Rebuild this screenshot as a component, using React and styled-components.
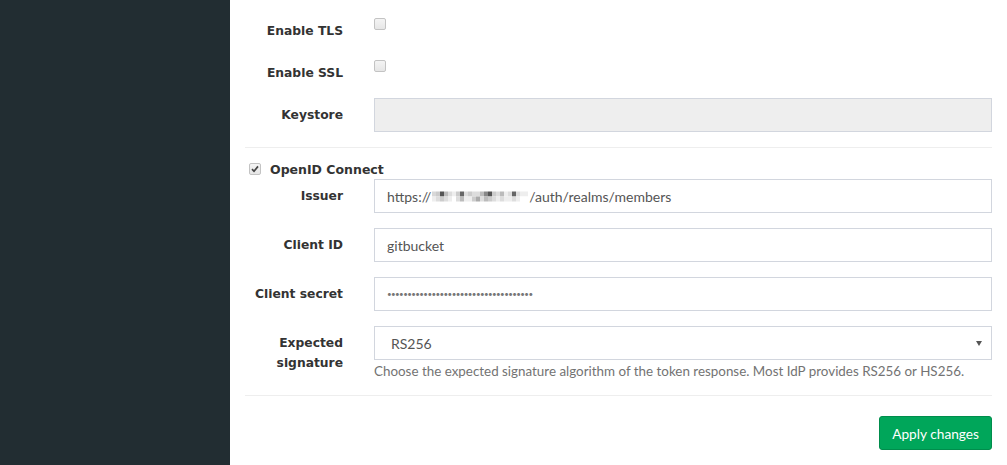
import styled, { createGlobalStyle } from "styled-components";

const GlobalStyle = createGlobalStyle`
  body {
    margin: 0;
    background: #fff;
    font-family: "Lato", "Liberation Sans", sans-serif;
  }
`;

const Page = styled.div`
  display: flex;
  height: 465px;
  overflow: hidden;
`;

const Sidebar = styled.aside`
  width: 230px;
  flex-shrink: 0;
  background: #222d32;
`;

const Content = styled.main`
  flex: 1;
  padding: 14px 15px 0 15px;
`;

const FormGroup = styled.div`
  display: flex;
  margin-bottom: ${(p) => (p.$last ? "0" : "15px")};
`;

const Label = styled.label`
  width: 98px;
  flex-shrink: 0;
  margin-right: 31px;
  padding-top: 7px;
  line-height: 20px;
  text-align: right;
  font-family: "DejaVu Sans", Verdana, sans-serif;
  font-weight: bold;
  font-size: 12.3px;
  color: #333;
`;

const Control = styled.div`
  flex: 1;
  min-width: 0;
  box-sizing: border-box;
  min-height: ${(p) => (p.$check ? "27px" : "auto")};
  padding-top: ${(p) => (p.$check ? "4px" : "0")};
`;

const Checkbox = styled.span`
  display: inline-block;
  box-sizing: border-box;
  width: 12px;
  height: 12px;
  border: 1px solid #c3c3c3;
  border-radius: 2px;
  background: linear-gradient(#f4f4f4, #e6e6e6);
  position: relative;
  vertical-align: top;

  svg {
    position: absolute;
    left: 1px;
    top: 1px;
  }
`;

const Input = styled.div`
  box-sizing: border-box;
  height: 34px;
  border: 1px solid #d2d6de;
  background: ${(p) => (p.$disabled ? "#eeeeee" : "#fff")};
  padding: 0 12px;
  display: flex;
  align-items: center;
  font-size: 14px;
  color: #555;
  white-space: nowrap;
`;

const Dots = styled.span`
  font-size: 8px;
  letter-spacing: -0.6px;
  color: #777;
`;

const SelectBox = styled.div`
  box-sizing: border-box;
  height: 34px;
  border: 1px solid #d2d6de;
  padding: 0 9px 0 16px;
  display: flex;
  align-items: center;
  justify-content: space-between;
  font-size: 14px;
  color: #555;
`;

const Help = styled.p`
  margin: 2px 0 0;
  line-height: 18px;
  font-size: 13.4px;
  color: #737373;
  white-space: nowrap;
`;

const Rule = styled.hr`
  margin: ${(p) => p.$margin || "0"};
  border: 0;
  border-top: 1px solid #eeeeee;
  height: 0;
`;

const SectionToggle = styled.div`
  display: flex;
  align-items: center;
  padding-top: 11px;
  padding-left: 4px;
  height: 20px;
  font-family: "DejaVu Sans", Verdana, sans-serif;
  font-weight: bold;
  font-size: 12.5px;
  color: #333;
  gap: 9px;
`;

const Footer = styled.div`
  display: flex;
  justify-content: flex-end;
  padding-top: 20px;
`;

const Button = styled.button`
  height: 34px;
  padding: 0 12px;
  border: 1px solid #008d4c;
  border-radius: 3px;
  background: #00a65a;
  color: #fff;
  font-family: "Lato", "Liberation Sans", sans-serif;
  font-size: 13.7px;
`;

const CheckMark = () => (
  <svg width="8" height="8" viewBox="0 0 8 8">
    <path d="M1 4.2 L3 6.3 L7 1.4" fill="none" stroke="#444" strokeWidth="1.7" />
  </svg>
);

const Box = ({ checked }) => <Checkbox>{checked && <CheckMark />}</Checkbox>;

const mosaic = [
  ["#d8d8d8", "#ccc", "#555", "#bbb", "#ddd", "#eee", "#ccc", "#666", "#ddd", "#ccc", "#ddd", "#ddd", "#bbb", "#888", "#555", "#ccc", "#ddd", "#bbb", "#eee", "#ddd", "#666", "#ddd", "#eee", "#eee"],
  ["#eee", "#ddd", "#ccc", "#ddd", "#eee", "#fff", "#ddd", "#bbb", "#eee", "#eee", "#ccc", "#aaa", "#ddd", "#bbb", "#ccc", "#ddd", "#eee", "#ddd", "#eee", "#eee", "#ddd", "#eee", "#fff", "#fff"],
];

const Masked = () => (
  <svg width="96" height="11" viewBox="0 0 96 10" style={{ margin: "0 1px" }}>
    {mosaic.map((row, r) =>
      row.map((c, i) => (
        <rect key={`${r}-${i}`} x={i * 4} y={r * 5} width="4" height="5" fill={c} />
      ))
    )}
  </svg>
);

export default function App() {
  return (
    <>
      <GlobalStyle />
      <Page>
        <Sidebar />
        <Content>
          <FormGroup>
            <Label>Enable TLS</Label>
            <Control $check>
              <Box />
            </Control>
          </FormGroup>
          <FormGroup>
            <Label>Enable SSL</Label>
            <Control $check>
              <Box />
            </Control>
          </FormGroup>
          <FormGroup $last>
            <Label>Keystore</Label>
            <Control>
              <Input $disabled />
            </Control>
          </FormGroup>
          <Rule $margin="15px 0 0" />

          <SectionToggle>
            <Box checked />
            OpenID Connect
          </SectionToggle>
          <FormGroup>
            <Label>Issuer</Label>
            <Control>
              <Input>
                https://
                <Masked />
                /auth/realms/members
              </Input>
            </Control>
          </FormGroup>
          <FormGroup>
            <Label>Client ID</Label>
            <Control>
              <Input>gitbucket</Input>
            </Control>
          </FormGroup>
          <FormGroup>
            <Label>Client secret</Label>
            <Control>
              <Input>
                <Dots>{"•".repeat(36)}</Dots>
              </Input>
            </Control>
          </FormGroup>
          <FormGroup $last>
            <Label>Expected signature</Label>
            <Control>
              <SelectBox>
                RS256
                <svg width="6" height="5" viewBox="0 0 6 5">
                  <path d="M0 0 H6 L3 5 Z" fill="#555" />
                </svg>
              </SelectBox>
              <Help>
                Choose the expected signature algorithm of the token response. Most IdP provides RS256 or HS256.
              </Help>
            </Control>
          </FormGroup>
          <Rule $margin="15px 0 0" />
          <Footer>
            <Button>Apply changes</Button>
          </Footer>
        </Content>
      </Page>
    </>
  );
}
